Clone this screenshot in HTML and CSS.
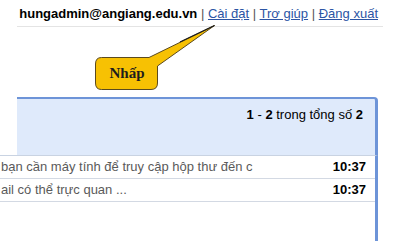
FILE: index.html
```html
<!doctype html>
<html lang="vi">
 <head>
  <meta charset="UTF-8">
  <title>Hộp thư</title>
  <link rel="stylesheet" href="styles.css">
 </head>
 <body>

  <div class="topbar">
   <b>hungadmin@angiang.edu.vn</b>
   <span class="sep">|</span> <a href="#">Cài đặt</a>
   <span class="sep">|</span> <a href="#">Trơ giúp</a>
   <span class="sep">|</span> <a href="#">Đăng xuất</a>
  </div>

  <!-- chú thích chỉ vào nút Cài đặt -->
  <div class="callout">
   <svg width="130" height="80" viewBox="90 20 130 80">
    <path d="M101.5,57.5 H149 L214.5,25.5 L157.5,66 V83 Q157.5,89.5 151,89.5 H101.5 Q95.5,89.5 95.5,83 V64 Q95.5,57.5 101.5,57.5 Z"
          fill="#f7c103" stroke="#5b4a1e" stroke-width="1"/>
    <path d="M180,42 L214.5,25.5" stroke="#1c1c1c" stroke-width="1.2"/>
   </svg>
   <span class="callout-text">Nhấp</span>
  </div>

  <div class="mail">
   <div class="mail-head">
    <b>1</b> - <b>2</b> trong tổng số <b>2</b>
   </div>
   <div class="mail-list">
    <div class="row">
     <span class="subj">bạn cần máy tính để truy cập hộp thư đến c</span>
     <span class="time">10:37</span>
    </div>
    <div class="row">
     <span class="subj">ail có thể trực quan ...</span>
     <span class="time">10:37</span>
    </div>
   </div>
  </div>

 </body>
</html>
```

FILE: styles.css
```css
*{margin:0;padding:0;box-sizing:border-box}

body{
	position:relative;
	width:400px;
	height:244px;
	overflow:hidden;
	background:#fff;
	font-family:"Liberation Sans",Arial,sans-serif;
	font-size:13px;
	color:#000;
}

/* thanh tài khoản phía trên */
.topbar{
	margin-left:17px;
	width:366px;
	height:27px;
	padding-top:6px;
	padding-right:5px;
	line-height:16px;
	text-align:right;
	border-bottom:1px solid #e4e4e4;
	white-space:nowrap;
}
.topbar a{
	color:#2c55a4;
	text-decoration:underline;
}
.topbar .sep{
	color:#555;
}

/* khung chú thích màu vàng */
.callout{
	position:absolute;
	left:90px;
	top:20px;
	width:130px;
	height:80px;
}
.callout svg{
	display:block;
}
.callout-text{
	position:absolute;
	left:6px;
	top:44px;
	width:62px;
	text-align:center;
	font-family:"Liberation Serif","Times New Roman",serif;
	font-weight:bold;
	font-size:15px;
	line-height:18px;
	color:#1d1d1d;
}

.mail{
	margin-top:70px;
	width:378px;
}
.mail-head{
	margin-left:17px;
	height:58px;
	padding-top:8px;
	padding-right:12px;
	line-height:16px;
	text-align:right;
	background:#dfeafb;
	border-top:2px solid #6d94d8;
	border-right:3px solid #6d94d8;
	border-top-right-radius:4px;
}
.mail-list{
	height:86px;
	border-right:3px solid #6d94d8;
	border-top:1px solid #c9d3e2;
}
.row{
	display:flex;
	justify-content:space-between;
	height:23px;
	line-height:22px;
	padding-right:9px;
	border-bottom:1px solid #d3d9e3;
	white-space:nowrap;
}
.subj{
	padding-left:1px;
	color:#5a5a5a;
}
.time{
	font-weight:bold;
}
```
